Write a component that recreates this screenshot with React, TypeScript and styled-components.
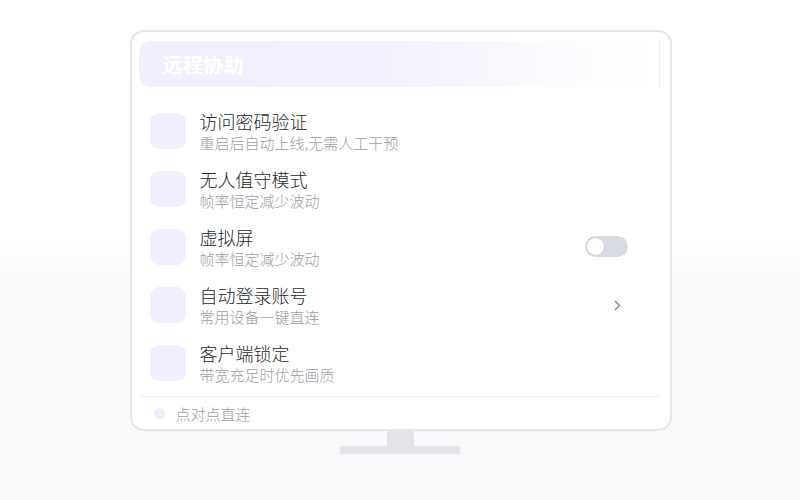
import React from "react";
import styled, { createGlobalStyle } from "styled-components";

const GlobalStyle = createGlobalStyle`
  html, body {
    margin: 0;
    padding: 0;
  }
  body {
    font-family: "Noto Sans CJK SC", "Noto Sans", sans-serif;
    background: linear-gradient(to bottom, #ffffff 0%, #ffffff 47%, #f9f9fb 56%, #f9f9fb 100%);
    min-height: 500px;
  }
`;

type Option = {
  title: string;
  desc: string;
  action?: "toggle" | "chevron";
};

const options: Option[] = [
  { title: "访问密码验证", desc: "重启后自动上线,无需人工干预" },
  { title: "无人值守模式", desc: "帧率恒定减少波动" },
  { title: "虚拟屏", desc: "帧率恒定减少波动", action: "toggle" },
  { title: "自动登录账号", desc: "常用设备一键直连", action: "chevron" },
  { title: "客户端锁定", desc: "带宽充足时优先画质" },
];

const App = () => {
  return (
    <StyledPage>
      <GlobalStyle />
      <StyledMonitor>
        <StyledHeader>
          <h2>远程协助</h2>
        </StyledHeader>
        <StyledList>
          {options.map((opt) => (
            <StyledRow key={opt.title}>
              <div className="row--icon" />
              <div className="row--text">
                <span className="row--title">{opt.title}</span>
                <span className="row--desc">{opt.desc}</span>
              </div>
              {opt.action === "toggle" && (
                <StyledToggle>
                  <span />
                </StyledToggle>
              )}
              {opt.action === "chevron" && (
                <StyledChevron width="7" height="11" viewBox="0 0 7 11">
                  <polyline
                    points="1.5,1.5 5.5,5.5 1.5,9.5"
                    fill="none"
                    stroke="#7b808a"
                    strokeWidth="1.4"
                    strokeLinecap="round"
                    strokeLinejoin="round"
                  />
                </StyledChevron>
              )}
            </StyledRow>
          ))}
        </StyledList>
        <StyledFooter>
          <span className="footer--dot" />
          <span>点对点直连</span>
        </StyledFooter>
      </StyledMonitor>
      <StyledNeck />
      <StyledBase />
    </StyledPage>
  );
};

const StyledPage = styled.div`
  width: 800px;
  height: 500px;
  display: flex;
  flex-direction: column;
  align-items: center;
  padding-top: 30px;
  box-sizing: border-box;
`;

const StyledMonitor = styled.div`
  width: 542px;
  height: 401px;
  box-sizing: border-box;
  border: 2px solid #e4e6ea;
  border-radius: 14px;
  background-color: #ffffff;
  padding: 9px 10px 0 7px;
  display: flex;
  flex-direction: column;
  margin-left: 1px;
`;

const StyledHeader = styled.div`
  height: 46px;
  border-radius: 12px 0 0 12px;
  background: linear-gradient(
    to right,
    #f1effc 0%,
    #f3f1fd 45%,
    #faf9fe 75%,
    #ffffff 100%
  );
  border-right: 1px solid #eceef2;
  display: flex;
  align-items: center;
  padding-left: 24px;

  h2 {
    margin: 0;
    font-size: 20px;
    font-weight: 700;
    color: #ffffff;
    letter-spacing: 0.3px;
  }
`;

const StyledList = styled.div`
  display: flex;
  flex-direction: column;
  margin-top: 15px;
`;

const StyledRow = styled.div`
  height: 58px;
  display: flex;
  align-items: center;
  padding: 0 32px 0 11px;

  .row--icon {
    width: 36px;
    height: 36px;
    border-radius: 9px;
    background-color: #f1effd;
    flex-shrink: 0;
  }

  .row--text {
    flex: 1;
    display: flex;
    flex-direction: column;
    margin-left: 14px;
  }

  .row--title {
    font-size: 18px;
    line-height: 24px;
    font-weight: 300;
    color: #26282c;
  }

  .row--desc {
    font-size: 15px;
    line-height: 20px;
    font-weight: 300;
    color: #9a9ea7;
  }
`;

const StyledToggle = styled.div`
  width: 43px;
  height: 21px;
  border-radius: 11px;
  background-color: #d8dbe1;
  position: relative;
  margin-bottom: 2px;

  span {
    position: absolute;
    left: 1px;
    top: 1px;
    width: 19px;
    height: 19px;
    border-radius: 50%;
    background-color: #ffffff;
    box-sizing: border-box;
    border: 1px solid #cdd0d6;
  }
`;

const StyledChevron = styled.svg`
  margin-right: 7px;
`;

const StyledFooter = styled.div`
  margin-top: 4px;
  border-top: 1px solid #eceef1;
  margin-left: 2px;
  height: 32px;
  display: flex;
  align-items: center;
  padding-left: 13px;
  gap: 11px;
  font-size: 15px;
  font-weight: 300;
  color: #9a9ea7;

  .footer--dot {
    width: 11px;
    height: 11px;
    border-radius: 50%;
    background-color: #efedfc;
  }
`;

const StyledNeck = styled.div`
  width: 27px;
  height: 15px;
  background-color: #e3e5e9;
`;

const StyledBase = styled.div`
  width: 120px;
  height: 8px;
  background-color: #e3e5e9;
`;

export default App;
